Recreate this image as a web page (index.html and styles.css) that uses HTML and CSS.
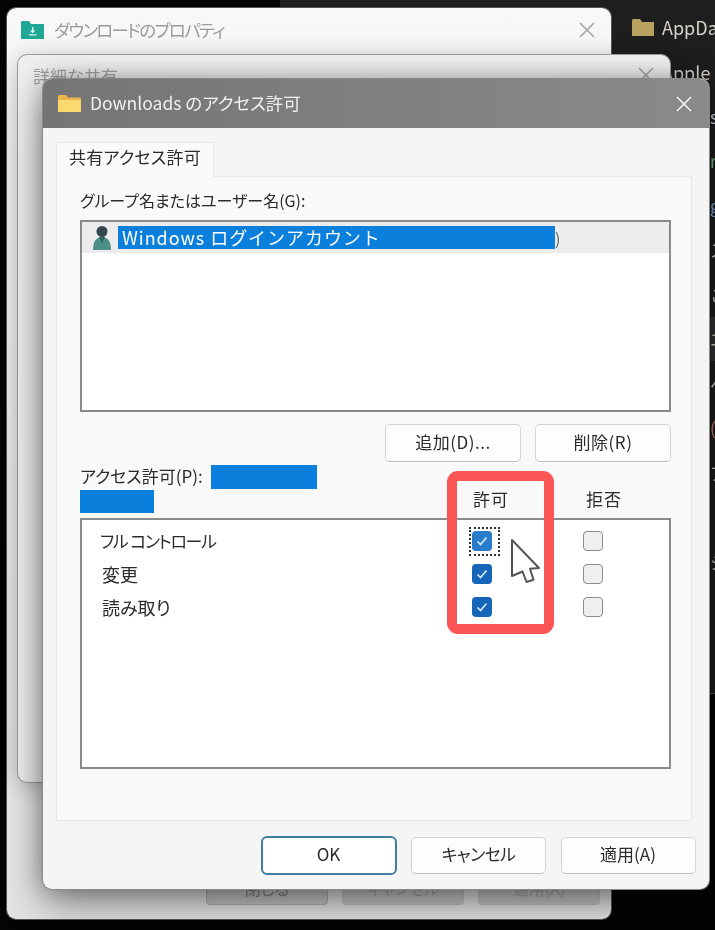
FILE: index.html
```html
<!DOCTYPE html>
<html lang="ja">
<head>
<meta charset="utf-8">
<title>Downloads のアクセス許可</title>
<link rel="stylesheet" href="styles.css">
</head>
<body>
<div class="desktop">
  <div class="explorer">
    <div class="file file-first">
      <svg class="file-icon" viewBox="0 0 22 17"><path fill="#b9a25f" d="M0 1.5C0 .7.7 0 1.5 0H8l2 3h12v14H0z"/></svg>
      <span>AppData</span>
    </div>
    <div class="file file-near"><span>Apple</span></div>
    <div class="file file-tail c-white"><span>s</span></div>
    <div class="file file-tail c-green"><span>r</span></div>
    <div class="file file-tail c-blue"><span>g</span></div>
    <div class="file file-tail"><span>ス</span></div>
    <div class="file file-tail"><span>こ</span></div>
    <div class="file file-tail file-band"><span>エ</span></div>
    <div class="file file-tail"><span>へ</span></div>
    <div class="file file-tail c-red"><span>(</span></div>
    <div class="file file-tail"><span>ア</span></div>
    <div class="file file-tail"><span></span></div>
    <div class="file file-tail"><span>ジ</span></div>
  </div>

  <section class="window window-props">
    <header class="title title-light">
      <svg class="title-icon" viewBox="0 0 23 18">
        <path fill="#1fa895" d="M0 1.500C0 .7.700 0 1.500 0H8l2 3h13v15H0z"/>
        <path fill="#dff5ef" d="M11 6h1.400v3.500h2.100L11.700 12.300 8.900 9.500H11zM8 13.200h7.400v1.200H8z"/>
      </svg>
      <span class="title-text title-tight">ダウンロードのプロパティ</span>
      <svg class="close close-gray" viewBox="0 0 16 16"><path d="M1 1l14 14M15 1L1 15"/></svg>
    </header>
    <footer class="props-footer">
      <span class="ghost-btn ghost-first">閉じる</span>
      <span class="ghost-btn">キャンセル</span>
      <span class="ghost-btn">適用(A)</span>
    </footer>
  </section>

  <section class="window window-share">
    <header class="title title-share">
      <span class="share-text">詳細な共有</span>
      <svg class="close close-gray" viewBox="0 0 16 16"><path d="M1 1l14 14M15 1L1 15"/></svg>
    </header>
  </section>

  <section class="window dialog">
    <header class="title title-dark">
      <svg class="title-icon folder" viewBox="0 0 23 17">
        <path fill="#e9b64b" d="M0 1.500C0 .7.700 0 1.500 0H8l2 2.500h13V17H0z"/>
        <path fill="#fbd96f" d="M0 5h23v12H0z"/>
      </svg>
      <span class="title-text title-main">Downloads のアクセス許可</span>
      <svg class="close close-white" viewBox="0 0 16 16"><path d="M1 1l14 14M15 1L1 15"/></svg>
    </header>

    <div class="dialog-body">
      <div class="tab">共有アクセス許可</div>
      <div class="panel">
        <div class="label">グループ名またはユーザー名(G):</div>
        <div class="listbox users">
          <div class="user-row">
            <svg class="user-icon" viewBox="0 0 20 26">
              <circle cx="10" cy="6.500" r="5.500" fill="#33474f"/>
              <path fill="#4b8f86" d="M1 25c0-8 3-13 9-13s9 5 9 13z"/>
              <path fill="#2d5f5c" d="M7 12h6l-3 6z"/>
            </svg>
            <span class="selected">Windows ログインアカウント</span>
            <span class="paren">)</span>
          </div>
        </div>
        <div class="action-row">
          <button class="btn btn-list">追加(D)...</button>
          <button class="btn btn-list">削除(R)</button>
        </div>
        <div class="perm-head">
          <div class="perm-label">
            <div class="perm-line"><span class="perm-name">アクセス許可(P):</span><i class="mask mask-a"></i></div>
            <i class="mask mask-b"></i>
          </div>
          <div class="perm-col">許可</div>
          <div class="perm-col">拒否</div>
        </div>
        <div class="listbox perms">
          <div class="perm-row">
            <span class="perm-kana">フル コントロール</span>
            <span class="check on focus"><svg viewBox="0 0 20 20"><path d="M5.500 10.500l3 3 6-7"/></svg></span>
            <span class="check"></span>
          </div>
          <div class="perm-row">
            <span class="perm-kanji">変更</span>
            <span class="check on strong"><svg viewBox="0 0 20 20"><path d="M5.500 10.500l3 3 6-7"/></svg></span>
            <span class="check"></span>
          </div>
          <div class="perm-row">
            <span class="perm-kanji">読み取り</span>
            <span class="check on strong"><svg viewBox="0 0 20 20"><path d="M5.500 10.500l3 3 6-7"/></svg></span>
            <span class="check"></span>
          </div>
        </div>
      </div>
      <div class="footer-row">
        <button class="btn btn-primary">OK</button>
        <button class="btn btn-foot btn-tight">キャンセル</button>
        <button class="btn btn-foot">適用(A)</button>
      </div>
    </div>
  </section>

  <div class="annotation"></div>
  <svg class="pointer" viewBox="0 0 32 46">
    <path d="M2 2l27 28-9 .7 3.500 11-7 2.300-4-10.500L2 38z"/>
  </svg>
</div>
</body>
</html>
```
FILE: styles.css
```css
* { box-sizing: border-box; }
html, body { margin: 0; padding: 0; background: #000; }
body { font-family: "Noto Sans CJK JP", "Noto Sans", sans-serif; color: #2b2b2b; }

.desktop { position: relative; width: 715px; height: 930px; overflow: hidden; background: #040404; filter: blur(.4px); }

/* dark file explorer behind the dialogs */
.explorer {
  position: absolute; left: 280px; top: 0; width: 435px; height: 694px;
  background: #1e1e1e; border-bottom: 1px solid #555;
  color: #d9d4cc; font-size: 18px;
  display: flex; flex-direction: column; padding-top: 5px;
}
.file { height: 44.500px; display: flex; align-items: center; padding-left: 352px; white-space: nowrap; flex: none; }
.file-first { padding-left: 352px; gap: 8px; }
.file-icon { width: 22px; height: 17px; flex: none; }
.file-near { padding-left: 382px; }
.file-tail { padding-left: 430px; font-size: 17px; }
.file-band { background: #333; }
.c-white { color: #cfe3f5; }
.c-green { color: #7fc48a; }
.c-blue { color: #8ab0e8; }
.c-red { color: #d9896a; }

/* windows, free on the desktop */
.window { position: absolute; border-radius: 9px; background: #f4f4f4; }
.window-props {
  left: 7px; top: 8px; width: 604px; height: 911px;
  display: flex; flex-direction: column; justify-content: space-between;
  background: linear-gradient(#f8f8f8, #ededed 50%, #e4e4e4);
  box-shadow: 0 0 0 1px #555;
}
.window-share {
  left: 18px; top: 55px; width: 652px; height: 727px;
  background: #efefef;
  box-shadow: 0 0 0 1px #9a9a9a, 0 4px 24px rgba(0,0,0,.25);
}
.dialog {
  left: 43px; top: 79px; width: 666px; height: 810px;
  background: #f5f5f5; overflow: visible;
  box-shadow: 0 0 0 1px #888, 0 14px 40px rgba(0,0,0,.45), 0 0 22px rgba(0,0,0,.25);
}

.title { display: flex; align-items: center; position: relative; }
.title-text { font-size: 18px; font-feature-settings: "palt"; white-space: nowrap; }
.title-tight { font-size: 17.500px; letter-spacing: -1.700px; }
.title-main { font-size: 17.500px; padding-bottom: 2px; }
.title-icon { width: 23px; height: 18px; flex: none; }
.title-light { height: 43px; padding: 0 16px 0 14px; gap: 10px; color: #9b9b9b; }
.title-light .close { margin-left: auto; }
.title-share { height: 46px; padding: 0 16px 0 15px; color: #a0a0a0; justify-content: space-between; align-items: flex-start; }
.share-text { font-size: 17px; line-height: 20px; margin-top: 11px; }
.title-share .close { margin-top: 12px; }
.title-dark {
  height: 49px; padding: 0 17px 0 15px; gap: 9px; color: #f0f0f0;
  background: linear-gradient(90deg, #757575, #8a8a8a);
  border-radius: 9px 9px 0 0;
}
.title-dark .close { margin-left: auto; }
.folder { height: 17px; }
.close { width: 16px; height: 16px; flex: none; fill: none; stroke-width: 1.600; }
.close-gray { stroke: #a4a4a4; }
.close-white { stroke: #f5f5f5; }

.props-footer { display: flex; justify-content: flex-end; gap: 14px; padding: 0 11px 14px 0; }
.ghost-btn {
  width: 122px; height: 35px; border: 1px solid #c0c0c0; border-radius: 4px;
  background: #c9c9c9; color: #ababab; font-size: 16px; font-feature-settings: "palt";
  display: flex; align-items: center; justify-content: center;
}
.ghost-first { background: #c8c8c8; color: #858585; border-color: #b0b0b0; }

.dialog-body { padding: 14px 17px 0 13px; display: flex; flex-direction: column; }
.tab {
  width: 158px; height: 35px; background: #fafafa;
  border: 1px solid #e6e6e6; border-bottom: 0; border-radius: 2px 2px 0 0;
  font-size: 17px; line-height: 28px; padding-left: 12px; font-feature-settings: "palt"; letter-spacing: .3px;
  margin-bottom: -1px; position: relative; z-index: 1;
}
.panel {
  height: 645px; background: #f9f9f9; border: 1px solid #e6e6e6;
  padding: 10px 20px 0 23px; display: flex; flex-direction: column;
}
.label { font-size: 16px; line-height: 26px; height: 33px; font-feature-settings: "palt"; }
.listbox { border: 2px solid #8a8a8a; background: #fff; }
.users { height: 192px; }
.user-row { height: 31px; background: #ececec; display: flex; align-items: center; padding-left: 10px; font-size: 18px; }
.user-icon { width: 20px; height: 26px; flex: none; }
.selected {
  margin-left: 6px; width: 437px; height: 23px; background: #0a7fdc; color: #fff;
  line-height: 22px; padding-left: 4px; letter-spacing: .95px; white-space: nowrap; overflow: hidden;
}
.paren { color: #666; font-size: 16px; line-height: 20px; }

.action-row { display: flex; justify-content: flex-end; gap: 14px; margin-top: 12px; }
.btn {
  font-family: inherit; color: #2b2b2b; background: #fdfdfd; padding: 0 0 4px;
  border: 1.500px solid #d4d4d4; border-bottom-color: #bdbdbd; border-radius: 5px;
  font-size: 17px; font-feature-settings: "palt";
  display: flex; align-items: center; justify-content: center;
}
.btn-list { width: 136px; height: 38px; letter-spacing: .5px; }
.btn-tight { letter-spacing: -.6px; }

.perm-head { height: 56px; margin-top: 3px; display: grid; grid-template-columns: 393px 113px 85px; }
.perm-label { display: flex; flex-direction: column; }
.perm-line { display: flex; height: 25px; align-items: flex-start; font-size: 17px; line-height: 22px; font-feature-settings: "palt"; }
.perm-name { width: 131px; flex: none; white-space: nowrap; }
.mask { display: block; background: #0a7fdc; }
.mask-a { width: 106px; height: 24px; }
.mask-b { width: 74px; height: 23px; }
.perm-col { font-size: 17px; line-height: 20px; padding-top: 24px; letter-spacing: 1px; }

.perms { height: 251px; padding: 4px 0 0 18px; margin-top: -3px; }
.perm-row { display: grid; grid-template-columns: 372px 111px 20px; align-items: center; height: 33px; font-size: 17px; font-feature-settings: "palt"; }
.perm-kana { letter-spacing: -1.300px; }
.perm-kanji { font-size: 18px; margin-left: 2px; }
.check {
  position: relative; width: 20px; height: 20px; border-radius: 4px;
  border: 1.500px solid #8c8c8c; background: #efefef;
}
.check.on { border: 0; background: #2a7bc9; }
.check.strong { background: #1565b8; }
.check svg { display: block; width: 20px; height: 20px; fill: none; stroke: #d5ecff; stroke-width: 1.600; }
.check.focus::before {
  content: ""; position: absolute; left: -3px; right: -8px; top: -4px; bottom: -5px;
  border: 2px dotted #333;
}

.footer-row { display: flex; gap: 14.500px; margin-top: 15px; padding-left: 204.500px; align-items: center; margin-right: -4px; }
.btn-primary { width: 136px; height: 39px; border: 2px solid #3f7f9c; border-radius: 6px; background: #fff; letter-spacing: 0; }
.btn-foot { width: 135px; height: 37px; }

/* annotation overlay */
.annotation {
  position: absolute; left: 447px; top: 471px; width: 107px; height: 163px;
  border: 10px solid #fb5555; border-radius: 11px;
}
.pointer {
  position: absolute; left: 510px; top: 538px; width: 32px; height: 46px;
  fill: #fff; stroke: #555; stroke-width: 2; stroke-linejoin: round;
}
```
